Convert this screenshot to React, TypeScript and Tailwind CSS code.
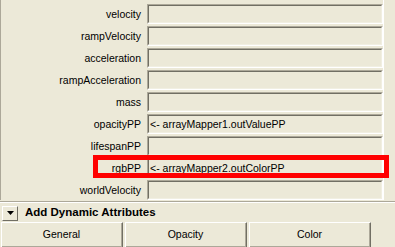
import React from "react";

const rows: { label: string; value?: string }[] = [
  { label: "velocity" },
  { label: "rampVelocity" },
  { label: "acceleration" },
  { label: "rampAcceleration" },
  { label: "mass" },
  { label: "opacityPP", value: "<- arrayMapper1.outValuePP" },
  { label: "lifespanPP" },
  { label: "rgbPP", value: "<- arrayMapper2.outColorPP" },
  { label: "worldVelocity" },
];

function Field({ value }: { value?: string }) {
  return (
    <div className="w-[236px] h-[20px] border-t border-l border-t-[#ACA899] border-l-[#ACA899] border-b border-r border-b-white border-r-white">
      <div className="h-full border-t border-l border-t-[#716F64] border-l-[#716F64] border-b border-r border-b-[#F1EFE2] border-r-[#F1EFE2] flex items-center pl-[1px] whitespace-nowrap">
        {value}
      </div>
    </div>
  );
}

function Btn({ label }: { label: string }) {
  return (
    <div className="w-[122px] h-[26px] border-t border-l border-t-white border-l-white border-b border-r border-b-[#716F64] border-r-[#716F64]">
      <div className="h-full border-b border-r border-b-[#ACA899] border-r-[#ACA899] flex items-center justify-center">
        {label}
      </div>
    </div>
  );
}

export default function App() {
  return (
    <div
      className="relative w-[395px] h-[247px] bg-[#ECE9D8] overflow-hidden text-black text-[10.5px] leading-none"
      style={{ fontFamily: '"Liberation Sans", Arial, sans-serif' }}
    >
      <div className="w-[384px] border-l border-l-[#ACA899] border-r border-r-white pt-[4px] flex flex-col gap-[2px] h-[200px]">
        {rows.map((r) => (
          <div key={r.label} className="flex items-center h-[20px]">
            <div className="w-[141px] text-right pr-[1px]">{r.label}</div>
            <div className="ml-[5px]">
              <Field value={r.value} />
            </div>
          </div>
        ))}
      </div>
      <div className="mt-[1px] border-t border-t-[#ACA899] border-b border-b-white" />
      <div className="flex items-center h-[18px] mt-[1px]">
        <div className="ml-[2px] w-[16px] h-[15px] border-t border-l border-t-white border-l-white border-b border-r border-b-[#716F64] border-r-[#716F64] flex items-center justify-center">
          <svg width="7" height="4" viewBox="0 0 7 4">
            <polygon points="0,0 7,0 3.5,4" fill="#000" />
          </svg>
        </div>
        <div className="ml-[7px] font-bold text-[11.5px]">Add Dynamic Attributes</div>
      </div>
      <div className="flex gap-[2px] pl-[1px] mt-[0px]">
        <Btn label="General" />
        <Btn label="Opacity" />
        <Btn label="Color" />
      </div>
      <div className="absolute left-[93px] top-[155px] w-[296px] h-[23px] border-[5px] border-[#FF0000]" />
    </div>
  );
}
